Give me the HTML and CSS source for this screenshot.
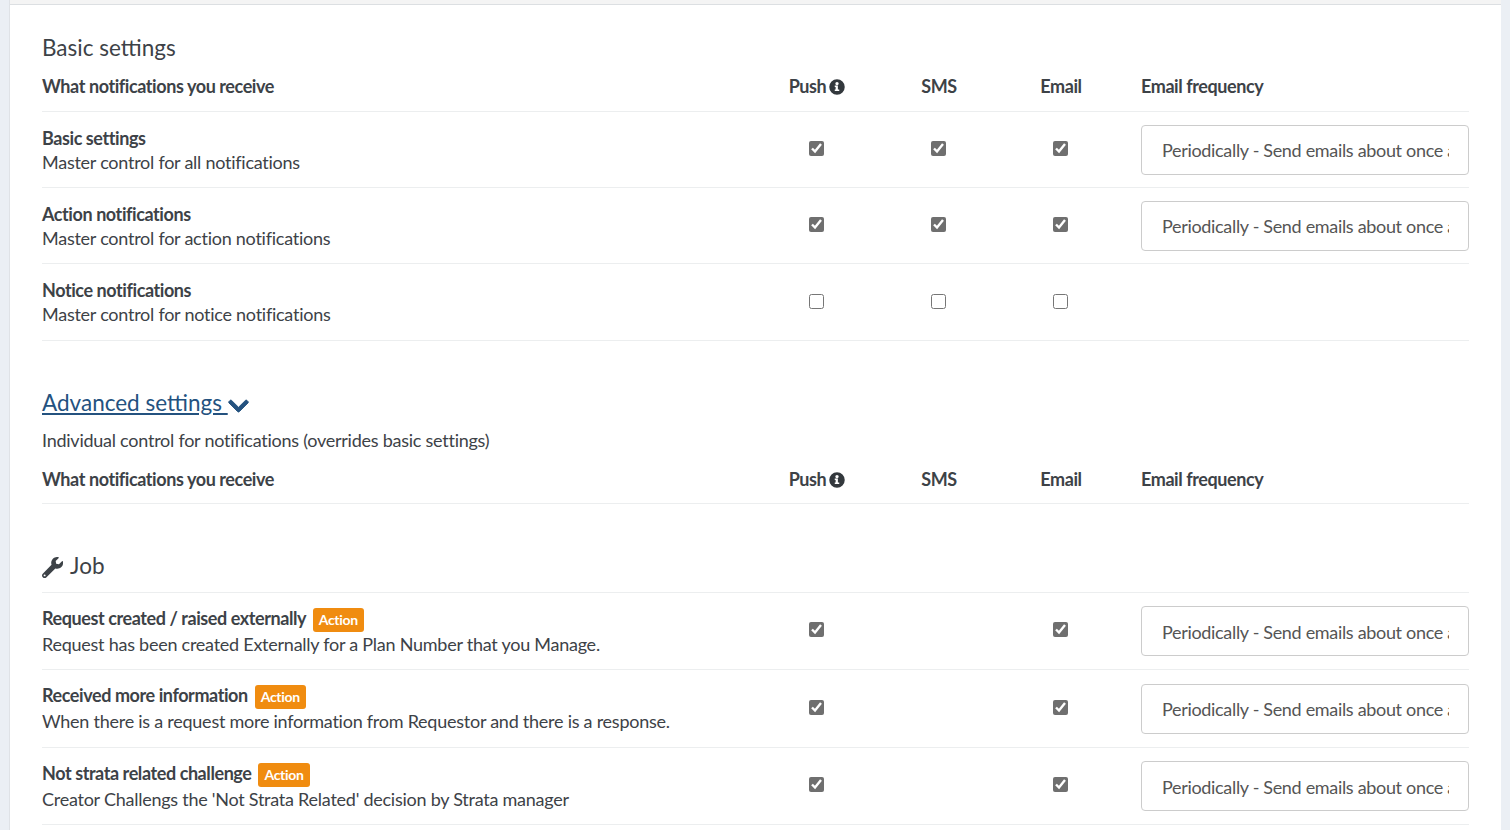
FILE: index.html
```html
<!DOCTYPE html>
<html lang="en">
<head>
<meta charset="utf-8">
<title>Notification settings</title>
<link rel="stylesheet" href="styles.css">
</head>
<body>
<main class="card">
  <h2 class="section-title">Basic settings</h2>
  <div class="row head">
    <div class="label">What notifications you receive</div>
    <div class="cell">Push <svg class="info" viewBox="0 0 512 512"><path fill-rule="evenodd" d="M256 8a248 248 0 1 0 0 496 248 248 0 0 0 0-496zm0 84a54 54 0 1 1 0 108 54 54 0 0 1 0-108zm72 288H184v-44h28v-84h-28v-44h100v128h44v44z"/></svg></div>
    <div class="cell">SMS</div>
    <div class="cell">Email</div>
    <div class="freq">Email frequency</div>
  </div>
  <div class="row item">
    <div class="label"><div class="name">Basic settings</div><div>Master control for all notifications</div></div>
    <div class="cell"><input type="checkbox" checked></div>
    <div class="cell"><input type="checkbox" checked></div>
    <div class="cell"><input type="checkbox" checked></div>
    <div class="freq"><select><option>Periodically - Send emails about once a day</option></select></div>
  </div>
  <div class="row item">
    <div class="label"><div class="name">Action notifications</div><div>Master control for action notifications</div></div>
    <div class="cell"><input type="checkbox" checked></div>
    <div class="cell"><input type="checkbox" checked></div>
    <div class="cell"><input type="checkbox" checked></div>
    <div class="freq"><select><option>Periodically - Send emails about once a day</option></select></div>
  </div>
  <div class="row item notice">
    <div class="label"><div class="name">Notice notifications</div><div>Master control for notice notifications</div></div>
    <div class="cell"><input type="checkbox"></div>
    <div class="cell"><input type="checkbox"></div>
    <div class="cell"><input type="checkbox"></div>
    <div class="freq"></div>
  </div>

  <h2 class="section-title advanced"><a href="#">Advanced settings </a><svg class="chev" viewBox="-10 110 468 290"><path d="M207 381.500 12.700 187.100c-9.400-9.400-9.400-24.600 0-33.900l22.700-22.700c9.400-9.400 24.500-9.400 33.900 0L224 284.500l154.700-154c9.400-9.300 24.500-9.300 33.900 0l22.700 22.700c9.400 9.300 9.400 24.500 0 33.900L241 381.500c-9.400 9.400-24.600 9.400-34 0z"/></svg></h2>
  <p class="intro">Individual control for notifications (overrides basic settings)</p>
  <div class="row head head-second">
    <div class="label">What notifications you receive</div>
    <div class="cell">Push <svg class="info" viewBox="0 0 512 512"><path fill-rule="evenodd" d="M256 8a248 248 0 1 0 0 496 248 248 0 0 0 0-496zm0 84a54 54 0 1 1 0 108 54 54 0 0 1 0-108zm72 288H184v-44h28v-84h-28v-44h100v128h44v44z"/></svg></div>
    <div class="cell">SMS</div>
    <div class="cell">Email</div>
    <div class="freq">Email frequency</div>
  </div>

  <h2 class="group-title"><svg class="wrench" viewBox="0 0 512 512"><path d="M507.700 109.100c-2.200-9-13.500-12-20.100-5.500l-74.400 74.400-68-11.300-11.300-68 74.400-74.400c6.600-6.600 3.400-17.900-5.700-20.200-47.400-11.700-99.600 1-136.700 38-39.700 39.700-50.700 97.200-33.800 147.100L18.700 405.900c-25 25-25 65.500 0 90.500s65.500 25 90.500 0l215.900-215.900c50 16.700 107.400 5.600 147-33.900 37.100-37.100 49.700-89.400 36.600-137.500zM64 472a24 24 0 1 1 0-48 24 24 0 0 1 0 48z"/></svg> Job</h2>
  <div class="row item first">
    <div class="label"><div class="name-badged">Request created / raised externally <span class="badge">Action</span></div><div>Request has been created Externally for a Plan Number that you Manage.</div></div>
    <div class="cell"><input type="checkbox" checked></div>
    <div class="cell"></div>
    <div class="cell"><input type="checkbox" checked></div>
    <div class="freq"><select><option>Periodically - Send emails about once a day</option></select></div>
  </div>
  <div class="row item tall">
    <div class="label"><div class="name-badged">Received more information <span class="badge">Action</span></div><div>When there is a request more information from Requestor and there is a response.</div></div>
    <div class="cell"><input type="checkbox" checked></div>
    <div class="cell"></div>
    <div class="cell"><input type="checkbox" checked></div>
    <div class="freq"><select><option>Periodically - Send emails about once a day</option></select></div>
  </div>
  <div class="row item notice">
    <div class="label"><div class="name-badged">Not strata related challenge <span class="badge">Action</span></div><div>Creator Challengs the 'Not Strata Related' decision by Strata manager</div></div>
    <div class="cell"><input type="checkbox" checked></div>
    <div class="cell"></div>
    <div class="cell"><input type="checkbox" checked></div>
    <div class="freq"><select><option>Periodically - Send emails about once a day</option></select></div>
  </div>
</main>
</body>
</html>
```
FILE: styles.css
```css
html, body {
  margin: 0;
  height: 830px;
  overflow: hidden;
  background: #ebeff4;
}
body {
  padding: 0 9px 0 10px;
  font: 18px/25px Lato, sans-serif;
  letter-spacing: -0.25px;
  color: #3d4247;
}
.card {
  background: #fff;
  height: 100%;
  box-sizing: border-box;
  padding: 0 32px;
  border-left: 1px solid #dfe2e6;
  margin-left: -1px;
}
.card::before {
  content: "";
  display: block;
  height: 4px;
  margin: 0 -32px;
  background: #f4f4f4;
  border-bottom: 1px solid #dcdfe2;
}
.section-title {
  margin: 0;
  padding-top: 28px;
  font-size: 22.5px;
  line-height: 30px;
  font-weight: 400;
  letter-spacing: 0;
}
.row {
  display: grid;
  grid-template-columns: 1fr 122px 122px 122px 347px;
  align-items: center;
  border-bottom: 1px solid #eceeef;
}
.head {
  height: 46px;
  padding-bottom: 2px;
  font-weight: 700;
  letter-spacing: -0.42px;
}
.head-second {
  height: 47px;
  padding: 3px 0 0;
}
.item {
  height: 76px;
  box-sizing: border-box;
}
.item.notice {
  height: 77px;
}
.item.tall {
  height: 78px;
}
.item.first {
  height: 78px;
  border-top: 1px solid #eceeef;
}
.name {
  font-weight: 700;
  letter-spacing: -0.42px;
  line-height: 27px;
  margin-bottom: -2px;
}
.name-badged {
  font-weight: 700;
  letter-spacing: -0.42px;
}
.cell {
  text-align: center;
}
.freq {
  padding-left: 19px;
}
.info {
  width: 16px;
  height: 16px;
  margin-left: -1px;
  vertical-align: -2px;
  fill: #33383d;
}
input[type="checkbox"] {
  display: block;
  width: 15px;
  height: 15px;
  margin: -3px 0 0 calc(50% - 8px);
  accent-color: #6f6f6f;
}
input[type="checkbox"]:not(:checked) {
  margin-top: -1px;
}
select {
  appearance: none;
  -webkit-appearance: none;
  display: block;
  width: 100%;
  height: 50px;
  padding: 1px 19px 0 20px;
  background: #fff;
  border: 1px solid #cccccc;
  border-radius: 4px;
  font: 18px Lato, sans-serif;
  letter-spacing: -0.32px;
  color: #555;
}
.advanced {
  padding-top: 47px;
}
.advanced a {
  color: #24527f;
  text-decoration: underline;
}
.chev {
  width: 21px;
  height: 14px;
  fill: #24527f;
  stroke: #24527f;
  stroke-width: 22;
  vertical-align: -2px;
}
.intro {
  margin: 0;
  padding-top: 10px;
}
.group-title {
  margin: 0;
  padding-top: 47px;
  height: 88px;
  box-sizing: border-box;
  font-size: 22.5px;
  line-height: 30px;
  font-weight: 400;
  letter-spacing: 0;
}
.wrench {
  width: 21px;
  height: 21px;
  margin-right: 2px;
  fill: #3d4247;
  vertical-align: -4px;
}
.badge {
  display: inline-block;
  margin-left: 3px;
  padding: 0 6px;
  background: #f08c10;
  color: #fff;
  border-radius: 3px;
  font-size: 14px;
  line-height: 24px;
  font-weight: 700;
  letter-spacing: -0.3px;
}
```
